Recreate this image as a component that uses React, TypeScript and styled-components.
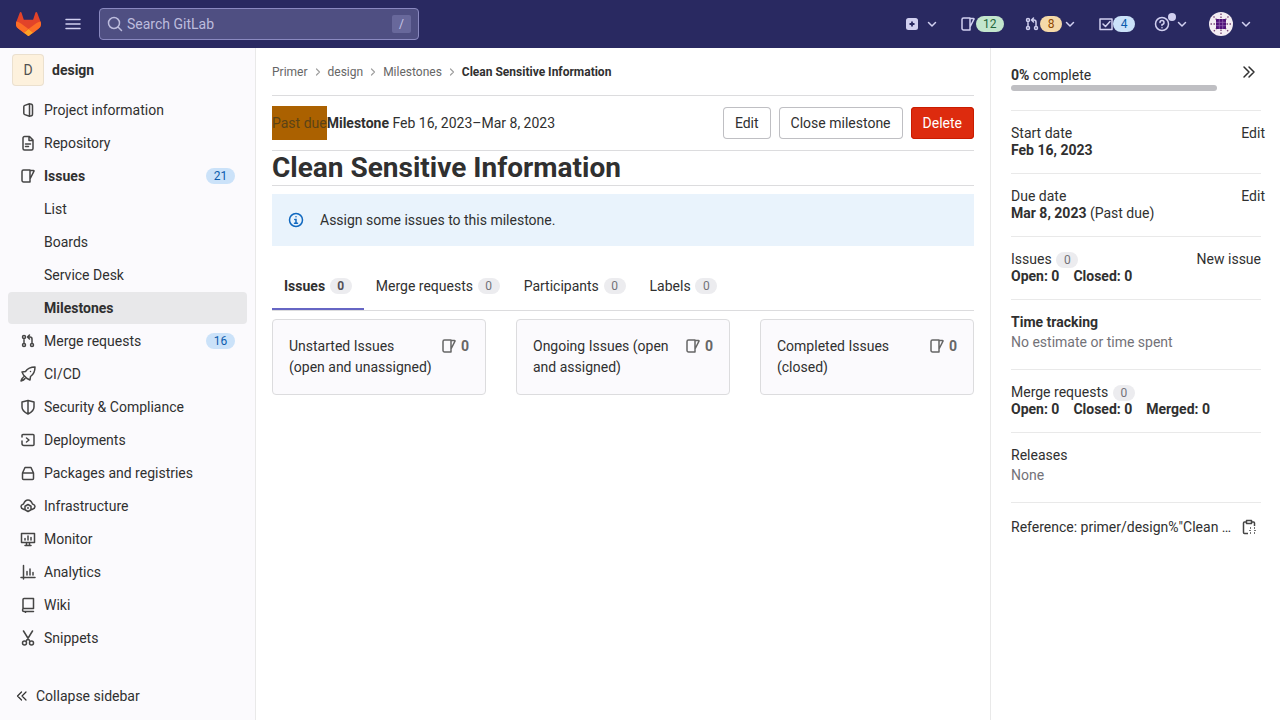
import React from "react";
import styled, { createGlobalStyle } from "styled-components";

const GlobalStyle = createGlobalStyle`
  html, body { margin: 0; padding: 0; height: 100%; }
  body {
    font-family: Roboto, "Noto Sans", "Liberation Sans", sans-serif;
    font-size: 14px;
    color: #303030;
    background: #fff;
    overflow: hidden;
  }
`;

const Page = styled.div`
  width: 1280px;
  height: 720px;
  display: flex;
  flex-direction: column;
`;

const TopBar = styled.header`
  height: 48px;
  flex: none;
  background: #292961;
  display: flex;
  align-items: center;
  padding-left: 16px;
`;

const Logo = styled.svg`
  width: 25px;
  height: 24px;
  margin-right: 24px;
`;

const Burger = styled.svg`
  width: 16px;
  height: 16px;
  color: #d1d0f0;
  margin-right: 18px;
`;

const Search = styled.div`
  width: 320px;
  height: 32px;
  box-sizing: border-box;
  background: #4f4f82;
  border: 1px solid #8a89c0;
  border-radius: 4px;
  display: flex;
  align-items: center;
  padding: 0 7px;
  color: #bdbcdd;
`;

const SearchText = styled.span`
  flex: 1;
  margin-left: 4px;
`;

const SlashKey = styled.span`
  width: 19px;
  height: 18px;
  border-radius: 2px;
  background: #68689b;
  color: #c8c7e6;
  font-size: 12px;
  display: flex;
  align-items: center;
  justify-content: center;
`;

const TopActions = styled.nav`
  margin-left: auto;
  display: flex;
  align-items: center;
  color: #d1d0f0;
`;

const TopItem = styled.div<{ $w: number }>`
  width: ${(p) => p.$w}px;
  display: flex;
  align-items: center;
  position: relative;
`;

const TopBadge = styled.span<{ $bg: string; $fg: string; $shift?: number }>`
  min-width: 22px;
  height: 16px;
  box-sizing: border-box;
  padding: 0 7px;
  margin-left: ${(p) => p.$shift ?? 0}px;
  border-radius: 8px;
  background: ${(p) => p.$bg};
  color: ${(p) => p.$fg};
  font-size: 12px;
  line-height: 16px;
  text-align: center;
`;

const HelpDot = styled.span`
  position: absolute;
  left: 14px;
  top: -3px;
  width: 8px;
  height: 8px;
  border-radius: 50%;
  background: #d1d0f0;
`;

const Chevron = styled.svg<{ $gap: number }>`
  width: 12px;
  height: 12px;
  margin-left: ${(p) => p.$gap}px;
  color: #d1d0f0;
`;

const Body = styled.div`
  flex: 1;
  display: flex;
  min-height: 0;
`;

const Sidebar = styled.aside`
  width: 256px;
  flex: none;
  box-sizing: border-box;
  background: #fbfafd;
  border-right: 1px solid #e9e9e9;
  display: flex;
  flex-direction: column;
  padding-top: 6px;
`;

const ProjectRow = styled.div`
  display: flex;
  align-items: center;
  height: 32px;
  padding-left: 12px;
  margin-bottom: 8px;
  font-weight: 700;
`;

const Avatar = styled.div`
  width: 32px;
  height: 32px;
  box-sizing: border-box;
  margin-right: 8px;
  border-radius: 4px;
  background: #fdf1dd;
  box-shadow: inset 0 0 0 1px rgba(31, 30, 36, 0.08);
  color: #525252;
  font-weight: 400;
  display: flex;
  align-items: center;
  justify-content: center;
`;

const Nav = styled.nav`
  display: flex;
  flex-direction: column;
  gap: 1px;
  padding: 0 8px;
`;

const NavRow = styled.div<{ $active?: boolean; $bold?: boolean }>`
  height: 32px;
  display: flex;
  align-items: center;
  padding: 0 12px;
  border-radius: 4px;
  background: ${(p) => (p.$active ? "#e8e8ea" : "transparent")};
  font-weight: ${(p) => (p.$bold ? 700 : 400)};
`;

const NavIcon = styled.span`
  width: 16px;
  height: 16px;
  margin-right: 8px;
  color: #454545;
  display: flex;
`;

const NavText = styled.span<{ $sub?: boolean }>`
  flex: 1;
  margin-left: ${(p) => (p.$sub ? "24px" : "0")};
`;

const NavCount = styled.span`
  width: 29px;
  height: 16px;
  border-radius: 8px;
  background: #cbe2f9;
  color: #0b5cad;
  font-size: 12px;
  font-weight: 400;
  line-height: 16px;
  text-align: center;
`;

const Collapse = styled.div`
  margin-top: auto;
  height: 48px;
  display: flex;
  align-items: center;
  padding-left: 16px;
`;

const CollapseIcon = styled.svg`
  width: 12px;
  height: 12px;
  margin-right: 8px;
`;

const Main = styled.main`
  width: 734px;
  flex: none;
  box-sizing: border-box;
  padding: 0 16px;
`;

const Crumbs = styled.div`
  height: 47px;
  border-bottom: 1px solid #dcdcde;
  display: flex;
  align-items: center;
  font-size: 12px;
  color: #666;
`;

const CrumbSep = styled.svg`
  width: 8px;
  height: 8px;
  margin: 0 6px;
  color: #a0a0a0;
`;

const CrumbCurrent = styled.span`
  font-weight: 700;
  color: #303030;
`;

const MilestoneBar = styled.div`
  height: 55px;
  box-sizing: border-box;
  border-bottom: 1px solid #dcdcde;
  display: flex;
  align-items: center;
`;

const PastDue = styled.span`
  height: 34px;
  background: #ab6100;
  line-height: 34px;
  color: #5c4316;
`;

const Strong = styled.strong`
  font-weight: 700;
`;

const MilestoneDates = styled.span`
  margin-left: 3.5px;
`;

const Buttons = styled.div`
  margin-left: auto;
  display: flex;
  gap: 8px;
`;

const Button = styled.button<{ $danger?: boolean }>`
  height: 32px;
  padding: 0 12px;
  border-radius: 4px;
  font: inherit;
  border: 0;
  background: ${(p) => (p.$danger ? "#dd2b0e" : "#fff")};
  color: ${(p) => (p.$danger ? "#fff" : "#303030")};
  box-shadow: inset 0 0 0 1px ${(p) => (p.$danger ? "#c91c00" : "#bfbfc3")};
`;

const Title = styled.h2`
  margin: 0 0 8px;
  height: 34px;
  border-bottom: 1px solid #dcdcde;
  font-size: 28px;
  line-height: 34px;
  font-weight: 700;
`;

const Alert = styled.div`
  height: 52px;
  background: #e9f3fc;
  display: flex;
  align-items: center;
  padding-left: 16px;
`;

const AlertIcon = styled.svg`
  width: 16px;
  height: 16px;
  color: #1068bf;
  margin-right: 16px;
`;

const Tabs = styled.div`
  margin-top: 24px;
  height: 40px;
  border-bottom: 1px solid #dcdcde;
  display: flex;
`;

const Tab = styled.div<{ $active?: boolean }>`
  height: 40px;
  box-sizing: border-box;
  padding: 0 12px 8px;
  display: flex;
  align-items: center;
  font-weight: ${(p) => (p.$active ? 700 : 400)};
  box-shadow: ${(p) => (p.$active ? "inset 0 -2px 0 #6666c4" : "none")};
`;

const Pill = styled.span<{ $strong?: boolean }>`
  display: inline-block;
  height: 16px;
  min-width: 10px;
  margin-left: 4.7px;
  padding: 0 6px;
  border-radius: 8px;
  background: #ececef;
  color: ${(p) => (p.$strong ? "#535158" : "#737278")};
  font-size: 12px;
  font-weight: ${(p) => (p.$strong ? 700 : 400)};
  line-height: 16px;
  text-align: center;
`;

const Cards = styled.div`
  margin-top: 8px;
  display: grid;
  grid-template-columns: repeat(3, 214px);
  justify-content: space-between;
`;

const Card = styled.div`
  height: 76px;
  box-sizing: border-box;
  background: #fbfafd;
  border: 1px solid #dcdcde;
  border-radius: 4px;
  padding: 16px;
  display: flex;
  justify-content: space-between;
`;

const CardTitle = styled.div`
  line-height: 21px;
  width: 150px;
`;

const CardCount = styled.div`
  display: flex;
  align-items: flex-start;
  font-weight: 700;
  color: #666;
  line-height: 20px;
`;

const CardIcon = styled.span`
  width: 16px;
  height: 16px;
  margin: 2px 4px 0 0;
  color: #666;
  display: flex;
`;

const Right = styled.aside`
  flex: 1;
  box-sizing: border-box;
  border-left: 1px solid #e9e9e9;
  padding: 0 19px 0 20px;
  position: relative;
`;

const Block = styled.section<{ $h: number; $pad?: number }>`
  height: ${(p) => p.$h}px;
  box-sizing: border-box;
  border-bottom: 1px solid #e9e9e9;
  padding-top: ${(p) => p.$pad ?? 14}px;
  display: flex;
  flex-direction: column;
`;

const RowBetween = styled.div`
  display: flex;
  justify-content: space-between;
  line-height: 17px;
`;

const EditLink = styled.span<{ $shift?: boolean }>`
  margin-right: ${(p) => (p.$shift ? "-4px" : "0")};
`;

const Line = styled.div`
  line-height: 17px;
`;

const Muted = styled.div`
  color: #737278;
  line-height: 20px;
  margin-top: 1px;
`;

const Counts = styled.div`
  font-weight: 700;
  line-height: 17px;
  display: flex;
  gap: 14px;
`;

const Progress = styled.div`
  width: 206px;
  height: 6px;
  border-radius: 3px;
  background: #bfbfc3;
  margin-top: 1px;
`;

const ExpandIcon = styled.svg`
  position: absolute;
  right: 23px;
  top: 16px;
  width: 16px;
  height: 16px;
`;

const Reference = styled.div`
  display: flex;
  align-items: center;
  justify-content: space-between;
  height: 20px;
  margin-top: 14px;
`;

const CopyIcon = styled.svg`
  width: 16px;
  height: 16px;
  margin-right: 4px;
  color: #454545;
`;

const Glyph = ({ d }: { d: string }) => (
  <svg viewBox="0 0 16 16" width="16" height="16" fill="none" stroke="currentColor" strokeWidth="1.5" strokeLinecap="round" strokeLinejoin="round">
    <path d={d} />
  </svg>
);

const ISSUES = "M3.5 2H10v12H3.500A1.500 1.500 0 0 1 2 12.500v-9A1.500 1.500 0 0 1 3.500 2zM10 2.500h3.500a.5.5 0 0 1 .5.7L10 11";
const MERGE = "M4 5.500v5M12 10.500V6a2 2 0 0 0-2-2H8M9.500 2l-2 2 2 2M5.500 4a1.500 1.500 0 1 1-3 0 1.500 1.500 0 0 1 3 0zM5.500 12a1.500 1.500 0 1 1-3 0 1.500 1.500 0 0 1 3 0zM13.500 12a1.500 1.500 0 1 1-3 0 1.500 1.500 0 0 1 3 0z";

const icons: Record<string, string> = {
  info: "M9.500 1.800 4.800 3.400a1.500 1.500 0 0 0-1 1.400v6.400a1.500 1.500 0 0 0 1 1.400l4.700 1.600zM9.500 2h1a2 2 0 0 1 2 2v8a2 2 0 0 1-2 2h-1",
  repo: "M3 3a1.500 1.500 0 0 1 1.500-1.500H9.500L13 5v8.500a1.500 1.500 0 0 1-1.500 1.500h-7A1.500 1.500 0 0 1 3 13.500zM9 2v3.500h4M5.500 9h5M5.500 11.500h3",
  issues: ISSUES,
  merge: MERGE,
  rocket: "M5.500 5.500C7.500 2.500 11 1 15 1c0 4-1.500 7.500-4.500 9.500L10 14l-3-1.500-3.500-3.500L2 6zM10.500 5.500h.01M3.500 11C2 12 1.500 13 1 15c2-.5 3-1 4-2.500",
  shield: "M8 1.500 14 3v5c0 3.500-3 5.500-6 7-3-1.500-6-3.500-6-7V3zM8 1.500V15",
  deploy: "M2 5V3.500a1 1 0 0 1 1-1h10a1 1 0 0 1 1 1v9a1 1 0 0 1-1 1H4a2 2 0 0 1-2-2V9M6.500 6 9 8l-2.500 2",
  pack: "M2.500 8h11v5.500a1 1 0 0 1-1 1h-9a1 1 0 0 1-1-1zM2.500 8 5 2.500h6L13.500 8",
  infra: "M4 11.500C2.500 11 1 10 1 8.500S2.500 6.500 3.500 6C4.500 3.500 6 2 8 2s3.500 1.500 4.500 4c1 .5 2.500 1 2.500 2.500s-1.500 2.500-3 3M8 6.500l3 1.750v3.500L8 13.500l-3-1.750v-3.500zM8 9.500v1",
  monitor: "M1.500 2.500h13v9h-13zM5 14.500h6M6.500 11.500v3M9.500 11.500v3M5 9V7.500M8 9V5M11 9V6.500",
  chart: "M1 13.500h14M3.500 1.500V15M7 7.500v3.500M10 5v6M13 8.500V11",
  wiki: "M3 12V2.500a1 1 0 0 1 1-1h9.500v10H4a1.500 1.500 0 0 0 0 3h9.500M5.500 14.500v1",
  snippet: "M3.500 1 9.700 11M12.500 1 6.300 11M6.500 13a2 2 0 1 1-4 0 2 2 0 0 1 4 0zM13.500 13a2 2 0 1 1-4 0 2 2 0 0 1 4 0z",
};

type NavEntry = { label: string; icon?: string; count?: number; bold?: boolean; active?: boolean };

const navEntries: NavEntry[] = [
  { label: "Project information", icon: "info" },
  { label: "Repository", icon: "repo" },
  { label: "Issues", icon: "issues", count: 21, bold: true },
  { label: "List" },
  { label: "Boards" },
  { label: "Service Desk" },
  { label: "Milestones", bold: true, active: true },
  { label: "Merge requests", icon: "merge", count: 16 },
  { label: "CI/CD", icon: "rocket" },
  { label: "Security & Compliance", icon: "shield" },
  { label: "Deployments", icon: "deploy" },
  { label: "Packages and registries", icon: "pack" },
  { label: "Infrastructure", icon: "infra" },
  { label: "Monitor", icon: "monitor" },
  { label: "Analytics", icon: "chart" },
  { label: "Wiki", icon: "wiki" },
  { label: "Snippets", icon: "snippet" },
];

const cardTitles = [
  "Unstarted Issues (open\u00a0and\u00a0unassigned)",
  "Ongoing Issues (open and assigned)",
  "Completed Issues (closed)",
];

const ChevronDown = ({ gap }: { gap: number }) => (
  <Chevron $gap={gap} viewBox="0 0 12 12" fill="none" stroke="currentColor" strokeWidth="1.5" strokeLinecap="round" strokeLinejoin="round">
    <path d="M2.500 4.500 6 8l3.500-3.500" />
  </Chevron>
);

const CrumbArrow = () => (
  <CrumbSep viewBox="0 0 8 8" fill="none" stroke="currentColor" strokeWidth="1.2" strokeLinecap="round" strokeLinejoin="round">
    <path d="M2.500 1 5.500 4 2.500 7" />
  </CrumbSep>
);

const App = () => (
  <Page>
    <GlobalStyle />
    <TopBar>
      <Logo viewBox="0 0 25 24">
        <path fill="#E24329" d="m24.507 9.5-.034-.09L21.082.562a.896.896 0 0 0-1.694.091l-2.29 7.01H7.825L5.535.653a.898.898 0 0 0-1.694-.09L.451 9.411.416 9.5a6.297 6.297 0 0 0 2.09 7.278l.012.01.03.022 5.16 3.867 2.56 1.935 1.554 1.176a1.051 1.051 0 0 0 1.268 0l1.555-1.176 2.56-1.935 5.197-3.89.014-.01A6.297 6.297 0 0 0 24.507 9.5Z" />
        <path fill="#FC6D26" d="m24.507 9.5-.034-.09a11.44 11.44 0 0 0-4.56 2.051l-7.447 5.632 4.742 3.584 5.197-3.89.014-.01A6.297 6.297 0 0 0 24.507 9.5Z" />
        <path fill="#FCA326" d="m7.707 20.677 2.56 1.935 1.555 1.176a1.051 1.051 0 0 0 1.268 0l1.555-1.176 2.56-1.935-4.743-3.584-4.755 3.584Z" />
        <path fill="#FC6D26" d="M5.01 11.461a11.43 11.43 0 0 0-4.56-2.05L.416 9.5a6.297 6.297 0 0 0 2.09 7.278l.012.01.03.022 5.16 3.867 4.745-3.584-7.444-5.632Z" />
      </Logo>
      <Burger viewBox="0 0 16 16" fill="none" stroke="currentColor" strokeWidth="1.5" strokeLinecap="round">
        <path d="M1 3.500h14M1 8h14M1 12.500h14" />
      </Burger>
      <Search>
        <svg viewBox="0 0 16 16" width="16" height="16" fill="none" stroke="currentColor" strokeWidth="1.5" strokeLinecap="round">
          <path d="M11.500 11.500 14.500 14.500M12.500 7a5.500 5.500 0 1 1-11 0 5.500 5.500 0 0 1 11 0z" />
        </svg>
        <SearchText>Search GitLab</SearchText>
        <SlashKey>/</SlashKey>
      </Search>
      <TopActions>
        <TopItem $w={56}>
          <svg viewBox="0 0 16 16" width="16" height="16">
            <rect x="2" y="2" width="12" height="12" rx="2.5" fill="#d1d0f0" />
            <path d="M8 5.500v5M5.500 8h5" stroke="#292961" strokeWidth="1.8" />
          </svg>
          <ChevronDown gap={6} />
        </TopItem>
        <TopItem $w={64}>
          <Glyph d={ISSUES} />
          <TopBadge $bg="#c3e6cd" $fg="#24663b">12</TopBadge>
        </TopItem>
        <TopItem $w={74}>
          <Glyph d={MERGE} />
          <TopBadge $bg="#f5d9a8" $fg="#8f4700">8</TopBadge>
          <ChevronDown gap={2} />
        </TopItem>
        <TopItem $w={56}>
          <Glyph d="M2 3h12v10.500H2zM5 8l2.500 2.500L12 5.500" />
          <TopBadge $bg="#cbe2f9" $fg="#0b5cad" $shift={-1}>4</TopBadge>
        </TopItem>
        <TopItem $w={55}>
          <Glyph d="M14.500 8a6.500 6.500 0 1 1-13 0 6.500 6.500 0 0 1 13 0zM6 6.500A2 2 0 1 1 8 8.500v1M8 11.800v.01" />
          <HelpDot />
          <ChevronDown gap={6} />
        </TopItem>
        <TopItem $w={71}>
          <svg viewBox="0 0 24 24" width="24" height="24">
            <circle cx="12" cy="12" r="12" fill="#f3ecf2" />
            <path d="M12 1.500v5M12 17.500v5M1.500 12h5M17.500 12h5M4.500 4.500l3.500 3.500M16 16l3.500 3.500M19.500 4.500 16 8M8 16l-3.500 3.500" stroke="#7b4a78" strokeWidth="1.4" strokeDasharray="1.5 1.5" />
            <rect x="7" y="7" width="10" height="10" rx="1" fill="#4f0f78" />
            <path d="M10.300 7v10M13.700 7v10M7 10.300h10M7 13.700h10" stroke="#9a6fb5" strokeWidth="0.7" />
          </svg>
          <ChevronDown gap={7} />
        </TopItem>
      </TopActions>
    </TopBar>
    <Body>
      <Sidebar>
        <ProjectRow>
          <Avatar>D</Avatar>
          design
        </ProjectRow>
        <Nav>
          {navEntries.map((n) => (
            <NavRow key={n.label} $active={n.active} $bold={n.bold}>
              {n.icon && (
                <NavIcon>
                  <Glyph d={icons[n.icon]} />
                </NavIcon>
              )}
              <NavText $sub={!n.icon}>{n.label}</NavText>
              {n.count !== undefined && <NavCount>{n.count}</NavCount>}
            </NavRow>
          ))}
        </Nav>
        <Collapse>
          <CollapseIcon viewBox="0 0 12 12" fill="none" stroke="currentColor" strokeWidth="1.2" strokeLinecap="round" strokeLinejoin="round">
            <path d="M5.500 2 1.500 6l4 4M10 2 6 6l4 4" />
          </CollapseIcon>
          Collapse sidebar
        </Collapse>
      </Sidebar>
      <Main>
        <Crumbs>
          Primer<CrumbArrow />design<CrumbArrow />Milestones<CrumbArrow />
          <CrumbCurrent>Clean Sensitive Information</CrumbCurrent>
        </Crumbs>
        <MilestoneBar>
          <PastDue>Past due</PastDue>
          <Strong>Milestone</Strong>
          <MilestoneDates>Feb 16, 2023–Mar 8, 2023</MilestoneDates>
          <Buttons>
            <Button>Edit</Button>
            <Button>Close milestone</Button>
            <Button $danger>Delete</Button>
          </Buttons>
        </MilestoneBar>
        <Title>Clean Sensitive Information</Title>
        <Alert>
          <AlertIcon viewBox="0 0 16 16" fill="none" stroke="currentColor" strokeWidth="1.5" strokeLinecap="round">
            <path d="M14.500 8a6.500 6.500 0 1 1-13 0 6.500 6.500 0 0 1 13 0zM6.800 7.500H8v3.500M6.500 11.200h3M8 4.800v.01" />
          </AlertIcon>
          Assign some issues to this milestone.
        </Alert>
        <Tabs>
          <Tab $active>Issues<Pill $strong>0</Pill></Tab>
          <Tab>Merge requests<Pill>0</Pill></Tab>
          <Tab>Participants<Pill>0</Pill></Tab>
          <Tab>Labels<Pill>0</Pill></Tab>
        </Tabs>
        <Cards>
          {cardTitles.map((t) => (
            <Card key={t}>
              <CardTitle>{t}</CardTitle>
              <CardCount>
                <CardIcon><Glyph d={ISSUES} /></CardIcon>0
              </CardCount>
            </Card>
          ))}
        </Cards>
      </Main>
      <Right>
        <ExpandIcon viewBox="0 0 16 16" fill="none" stroke="currentColor" strokeWidth="1.5" strokeLinecap="round" strokeLinejoin="round">
          <path d="M3 3l5 5-5 5M8 3l5 5-5 5" />
        </ExpandIcon>
        <Block $h={63} $pad={19}>
          <Line><Strong>0%</Strong> complete</Line>
          <Progress />
        </Block>
        <Block $h={63}>
          <RowBetween>
            <span>Start date</span><EditLink $shift>Edit</EditLink>
          </RowBetween>
          <Line><Strong>Feb 16, 2023</Strong></Line>
        </Block>
        <Block $h={63}>
          <RowBetween>
            <span>Due date</span><EditLink $shift>Edit</EditLink>
          </RowBetween>
          <Line><Strong>Mar 8, 2023</Strong> (Past due)</Line>
        </Block>
        <Block $h={63}>
          <RowBetween>
            <span>Issues<Pill>0</Pill></span><EditLink>New issue</EditLink>
          </RowBetween>
          <Counts><span>Open: 0</span><span>Closed: 0</span></Counts>
        </Block>
        <Block $h={70}>
          <Line><Strong>Time tracking</Strong></Line>
          <Muted>No estimate or time spent</Muted>
        </Block>
        <Block $h={63}>
          <Line>Merge requests<Pill>0</Pill></Line>
          <Counts><span>Open: 0</span><span>Closed: 0</span><span>Merged: 0</span></Counts>
        </Block>
        <Block $h={70}>
          <Line>Releases</Line>
          <Muted>None</Muted>
        </Block>
        <Reference>
          <span>Reference: primer/design%"Clean …</span>
          <CopyIcon viewBox="0 0 16 16" fill="none" stroke="currentColor" strokeWidth="1.5" strokeLinejoin="round">
            <path d="M5 3H3.500a1 1 0 0 0-1 1v9.500a1 1 0 0 0 1 1H7M11 3h1.500a1 1 0 0 1 1 1v3M5.500 1.500h5v3h-5zM9 9h1M13 9h1M9 14h1M13 14h1M9 11v1M14 11v1" />
          </CopyIcon>
        </Reference>
      </Right>
    </Body>
  </Page>
);

export default App;
